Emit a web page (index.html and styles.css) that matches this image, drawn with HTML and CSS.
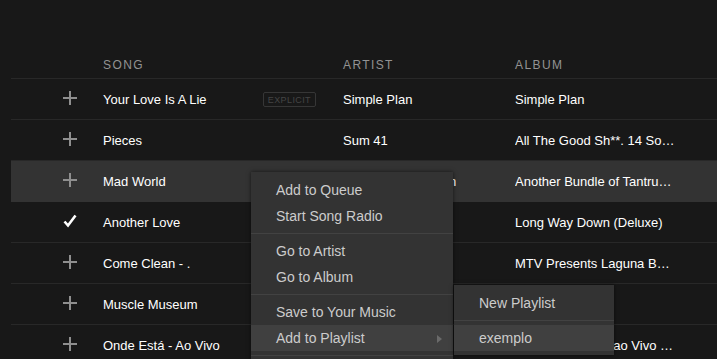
FILE: index.html
```html
<!DOCTYPE html>
<html lang="en">
<head>
    <meta charset="UTF-8">
    <title>Songs</title>
    <link rel="stylesheet" href="styles.css">
</head>
<body>
    <div class="tracklist">
        <div class="row head">
            <span></span>
            <span>Song</span>
            <span>Artist</span>
            <span>Album</span>
        </div>

        <div class="row">
            <span class="add"><svg viewBox="0 0 14 14"><path d="M7 0v14M0 7h14"/></svg></span>
            <span class="song">Your Love Is A Lie <em class="explicit">Explicit</em></span>
            <span>Simple Plan</span>
            <span class="album">Simple Plan</span>
        </div>
        <div class="row">
            <span class="add"><svg viewBox="0 0 14 14"><path d="M7 0v14M0 7h14"/></svg></span>
            <span class="song">Pieces</span>
            <span>Sum 41</span>
            <span class="album">All The Good Sh**. 14 Solid Gold Hits</span>
        </div>
        <div class="row selected">
            <span class="add"><svg viewBox="0 0 14 14"><path d="M7 0v14M0 7h14"/></svg></span>
            <span class="song">Mad World</span>
            <span>Jasmine Thompson</span>
            <span class="album">Another Bundle of Tantrums</span>
        </div>
        <div class="row">
            <span class="add saved"><svg viewBox="0 0 14 14"><path d="M1.5 7.5l3.5 4 7.5-10"/></svg></span>
            <span class="song">Another Love</span>
            <span>Tom Odell</span>
            <span class="album">Long Way Down (Deluxe)</span>
        </div>
        <div class="row">
            <span class="add"><svg viewBox="0 0 14 14"><path d="M7 0v14M0 7h14"/></svg></span>
            <span class="song">Come Clean - .</span>
            <span>Hilary Duff</span>
            <span class="album">MTV Presents Laguna Beach</span>
        </div>
        <div class="row">
            <span class="add"><svg viewBox="0 0 14 14"><path d="M7 0v14M0 7h14"/></svg></span>
            <span class="song">Muscle Museum</span>
            <span>Muse</span>
            <span class="album">Showbiz</span>
        </div>
        <div class="row">
            <span class="add"><svg viewBox="0 0 14 14"><path d="M7 0v14M0 7h14"/></svg></span>
            <span class="song">Onde Está - Ao Vivo</span>
            <span>Oficina G3</span>
            <span class="album">Depois da Luta I ao Vivo em S&atilde;o Paulo</span>
        </div>
    </div>

    <div class="menu">
        <div class="menu-group">
            <div class="menu-item">Add to Queue</div>
            <div class="menu-item">Start Song Radio</div>
        </div>
        <div class="menu-group">
            <div class="menu-item">Go to Artist</div>
            <div class="menu-item">Go to Album</div>
        </div>
        <div class="menu-group">
            <div class="menu-item">Save to Your Music</div>
            <div class="menu-item active has-sub">Add to Playlist</div>
        </div>
        <div class="menu-group">
            <div class="menu-item">Copy Song Link</div>
        </div>
    </div>

    <div class="menu submenu">
        <div class="menu-group">
            <div class="menu-item">New Playlist</div>
        </div>
        <div class="menu-group">
            <div class="menu-item active">exemplo</div>
        </div>
    </div>
</body>
</html>
```

FILE: styles.css
```css
body {
    margin: 0;
    height: 359px;
    overflow: hidden;
    background-color: #181818;
    color: #ffffff;
    font-family: "Liberation Sans", Arial, sans-serif;
    font-size: 13px;
}
.tracklist {
    padding-top: 52px;
    margin-left: 11px;
}
.row {
    display: grid;
    grid-template-columns: 92px 240px 172px 160px 1fr;
    align-items: center;
    height: 40px;
    border-bottom: 1px solid #282828;
    white-space: nowrap;
}
.row.head {
    height: 26px;
    color: #939393;
    font-size: 12px;
    letter-spacing: 1.4px;
    text-transform: uppercase;
}
.row.selected {
    background-color: #333333;
    border-bottom-color: #333333;
}
.add {
    display: flex;
    padding-left: 52px;
    margin-top: -2px;
}
.add svg {
    width: 14px;
    height: 14px;
    fill: none;
    stroke: #8f8f8f;
    stroke-width: 2;
}
.add.saved svg {
    stroke: #ffffff;
    stroke-width: 2.6;
}
.song {
    display: flex;
    align-items: center;
    padding-right: 27px;
}
.explicit {
    margin-left: auto;
    padding: 2px 4px 1px;
    border: 1px solid #363636;
    border-radius: 2px;
    color: #454545;
    font-size: 9px;
    font-style: normal;
    letter-spacing: 0.4px;
    text-transform: uppercase;
}
.album {
    overflow: hidden;
    text-overflow: ellipsis;
}
.menu {
    position: absolute;
    left: 251px;
    top: 172px;
    width: 202px;
    padding-top: 1px;
    background-color: #333333;
    box-shadow: 0 0 4px rgba(0, 0, 0, 0.6);
    color: #cccccc;
    font-size: 14px;
}
.menu-group {
    padding: 4px 0;
    border-top: 1px solid #424242;
}
.menu-group:first-child {
    border-top: none;
}
.menu-item {
    position: relative;
    height: 26px;
    line-height: 26px;
    padding-left: 25px;
}
.menu-item.active {
    background-color: #404040;
}
.has-sub::after {
    content: "";
    position: absolute;
    right: 11px;
    top: 10px;
    border-left: 5px solid #6a6a6a;
    border-top: 4px solid transparent;
    border-bottom: 4px solid transparent;
}
.submenu {
    left: 454px;
    top: 285px;
    width: 160px;
}
```
